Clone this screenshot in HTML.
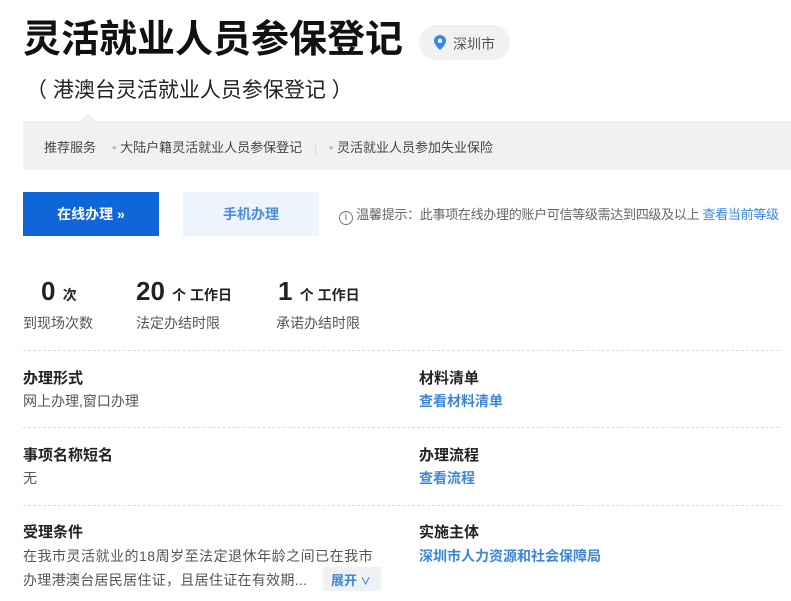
<!DOCTYPE html>
<html><head><meta charset="utf-8"><style>
body{margin:0;width:791px;height:601px;overflow:hidden;background:#fff;font-family:"Liberation Sans","Noto Sans CJK SC",sans-serif;color:#333;position:relative}
.a{position:absolute;white-space:nowrap}
.h{font-size:15px;font-weight:bold;color:#222}
.v{font-size:14px;color:#555}
.l{font-size:14px;color:#3d86d8;font-weight:bold}
.dash{position:absolute;left:23px;width:756px;border-top:1px dashed #ddd}
</style></head><body>
<div class="a" style="left:23px;top:14px;font-size:38px;font-weight:bold;color:#111;line-height:52px">灵活就业人员参保登记</div>
<div class="a" style="left:419px;top:25px;width:91px;height:35px;border-radius:18px;background:#f0f1f3"></div>
<svg class="a" style="left:434px;top:35px" width="12" height="15" viewBox="0 0 12 15"><path d="M6 0C2.7 0 0 2.6 0 5.8 0 10 6 15 6 15s6-5 6-9.2C12 2.6 9.3 0 6 0z" fill="#3b87e8"/><circle cx="6" cy="5.8" r="2.2" fill="#fff"/></svg>
<div class="a" style="left:453px;top:34px;font-size:14px;color:#555">深圳市</div>
<div class="a" style="left:26px;top:74px;font-size:21px;color:#222">（ 港澳台灵活就业人员参保登记 ）</div>
<div class="a" style="left:23px;top:121px;width:768px;height:49px;background:#f0f1f3"></div>
<div class="a" style="left:80px;top:113px;width:0;height:0;border-left:8px solid transparent;border-right:8px solid transparent;border-bottom:8px solid #f0f1f3"></div>
<div class="a" style="left:44px;top:137px;font-size:13px;color:#444">推荐服务</div>
<div class="a" style="left:112px;top:137px;font-size:13px;color:#444"><span style="color:#bbb">•</span> 大陆户籍灵活就业人员参保登记 <span style="color:#ddd;margin:0 8px">|</span> <span style="color:#bbb">•</span> 灵活就业人员参加失业保险</div>
<div class="a" style="left:23px;top:192px;width:136px;height:44px;background:#0f66d8;color:#fff;font-size:14px;font-weight:bold;line-height:44px;text-align:center">在线办理 »</div>
<div class="a" style="left:183px;top:192px;width:136px;height:44px;background:#eef4fb;color:#4a8ee0;font-size:14px;font-weight:bold;line-height:44px;text-align:center">手机办理</div>
<div class="a" style="left:339px;top:204px;font-size:13px;color:#666;letter-spacing:-0.3px"><span style="display:inline-block;width:12px;height:12px;border:1px solid #777;border-radius:50%;font-size:10px;line-height:12px;text-align:center;vertical-align:-1px;letter-spacing:0">i</span> 温馨提示：此事项在线办理的账户可信等级需达到四级及以上 <span style="color:#3d86d8">查看当前等级</span></div>
<div class="a" style="left:41px;top:276px;font-size:26px;font-weight:bold;color:#222">0 <span style="font-size:14px">次</span></div>
<div class="a" style="left:23px;top:313px" ><span class="v">到现场次数</span></div>
<div class="a" style="left:136px;top:276px;font-size:26px;font-weight:bold;color:#222">20 <span style="font-size:14px">个 工作日</span></div>
<div class="a v" style="left:136px;top:313px">法定办结时限</div>
<div class="a" style="left:278px;top:276px;font-size:26px;font-weight:bold;color:#222">1 <span style="font-size:14px">个 工作日</span></div>
<div class="a v" style="left:276px;top:313px">承诺办结时限</div>
<div class="dash" style="top:350px"></div>
<div class="a h" style="left:23px;top:367px">办理形式</div>
<div class="a v" style="left:23px;top:391px">网上办理,窗口办理</div>
<div class="a h" style="left:419px;top:367px">材料清单</div>
<div class="a l" style="left:419px;top:391px">查看材料清单</div>
<div class="dash" style="top:427px"></div>
<div class="a h" style="left:23px;top:444px">事项名称短名</div>
<div class="a v" style="left:23px;top:468px">无</div>
<div class="a h" style="left:419px;top:444px">办理流程</div>
<div class="a l" style="left:419px;top:468px">查看流程</div>
<div class="dash" style="top:505px"></div>
<div class="a h" style="left:23px;top:521px">受理条件</div>
<div class="a v" style="left:23px;top:546px;letter-spacing:0.5px">在我市灵活就业的18周岁至法定退休年龄之间已在我市</div>
<div class="a v" style="left:23px;top:570px;letter-spacing:0.3px">办理港澳台居民居住证，且居住证在有效期...</div>
<div class="a" style="left:323px;top:567px;width:58px;height:24px;background:#f0f1f3"></div>
<div class="a" style="left:331px;top:570px;font-size:13px;font-weight:bold;color:#3d86d8">展开 <span style="font-size:10px">∨</span></div>
<div class="a h" style="left:419px;top:521px">实施主体</div>
<div class="a l" style="left:419px;top:546px">深圳市人力资源和社会保障局</div>
</body></html>
